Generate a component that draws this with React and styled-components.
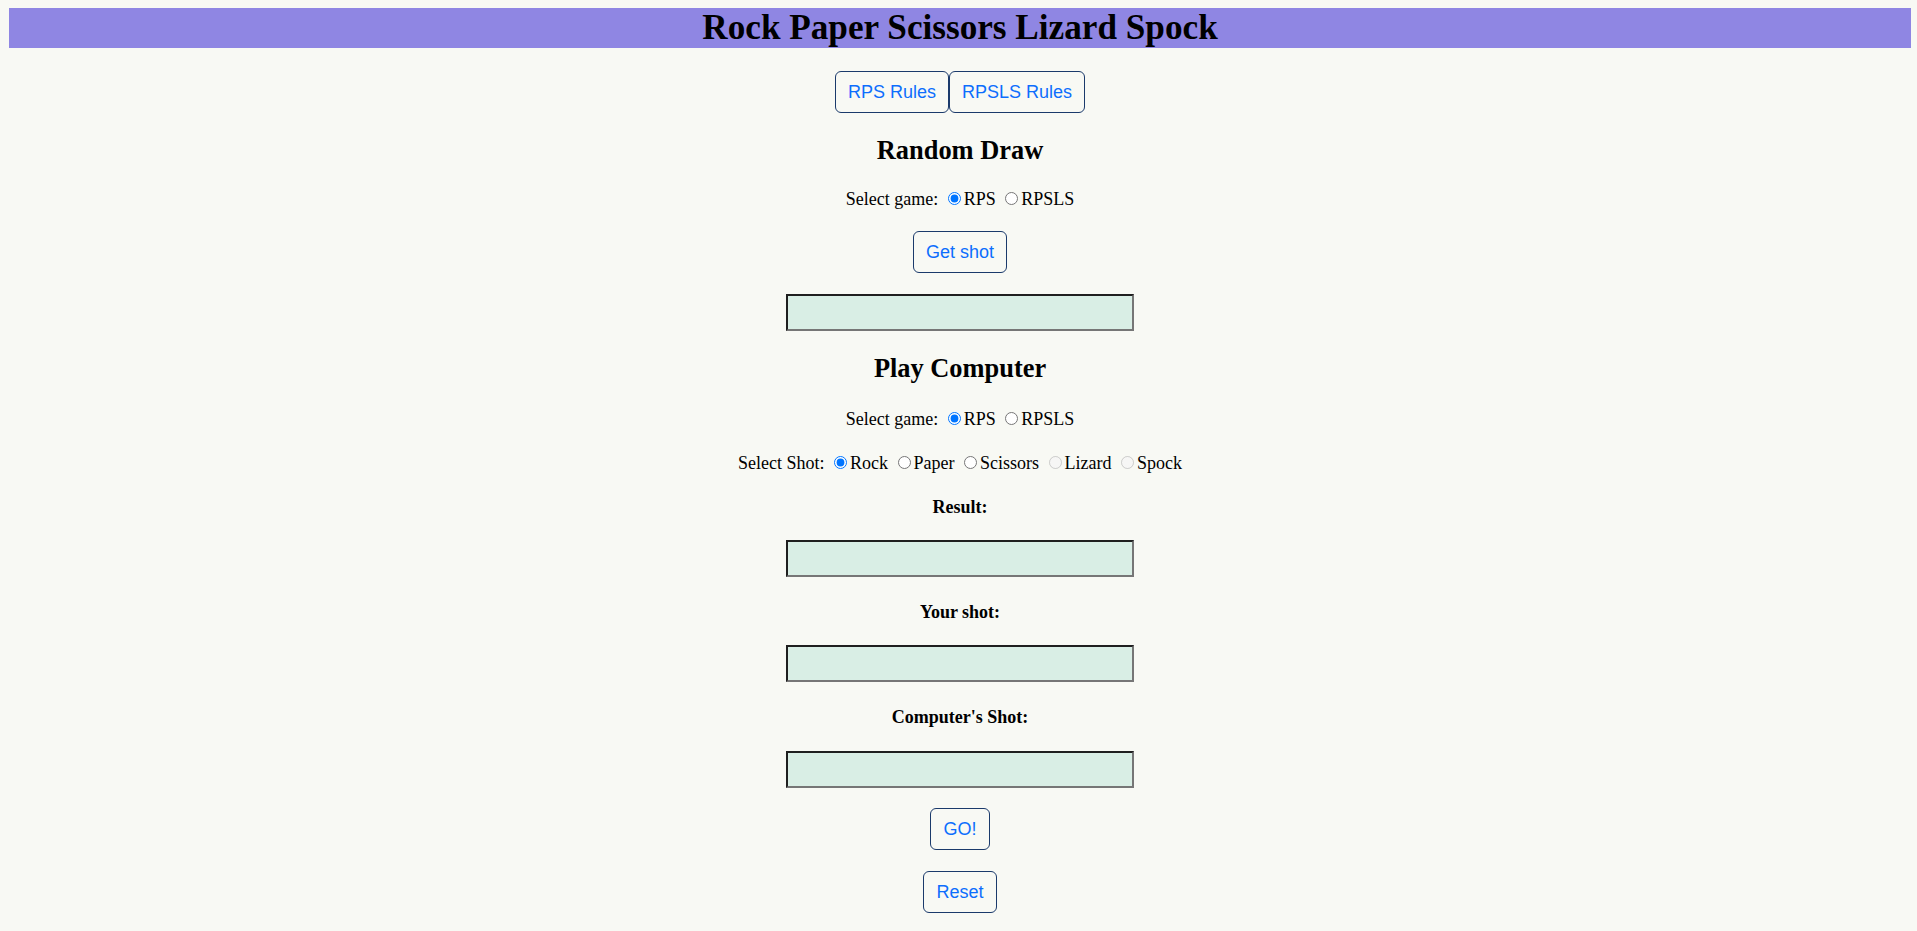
import React from "react";
import styled, { createGlobalStyle } from "styled-components";

//Global page look
const GlobalStyle = createGlobalStyle`
  body {
    margin: 8px 6px 8px 9px;
    background: #f8f9f4;
    font-family: "Liberation Serif", "Times New Roman", serif;
    font-size: 18px;
    color: #000;
  }
`;

const App = () => {
  return (
    <>
      <GlobalStyle />
      <Page>
        <Title>Rock Paper Scissors Lizard Spock</Title>
        <RulesBar $mt={23}>
          <Button>RPS Rules</Button>
          <Button>RPSLS Rules</Button>
        </RulesBar>

        {/* Random Draw */}
        <SectionTitle $mt={22.6}>Random Draw</SectionTitle>
        <ChoiceRow $mt={22.6}>
          Select game: <Radio name="draw-game" defaultChecked />RPS{" "}
          <Radio name="draw-game" />RPSLS
        </ChoiceRow>
        <Button $mt={19.8}>Get shot</Button>
        <Output $mt={21} readOnly />

        {/* Play Computer */}
        <SectionTitle $mt={22.9}>Play Computer</SectionTitle>
        <ChoiceRow $mt={23.7}>
          Select game: <Radio name="play-game" defaultChecked />RPS{" "}
          <Radio name="play-game" />RPSLS
        </ChoiceRow>
        <ChoiceRow $mt={20.6}>
          Select Shot: <Radio name="shot" defaultChecked />Rock{" "}
          <Radio name="shot" />Paper{" "}
          <Radio name="shot" />Scissors{" "}
          <Radio name="shot" disabled />Lizard{" "}
          <Radio name="shot" disabled />Spock
        </ChoiceRow>
        <FieldLabel $mt={20.4}>Result:</FieldLabel>
        <Output $mt={21.4} readOnly />
        <FieldLabel $mt={23.6}>Your shot:</FieldLabel>
        <Output $mt={21.4} readOnly />
        <FieldLabel $mt={24.2}>Computer's Shot:</FieldLabel>
        <Output $mt={21.8} readOnly />
        <Button $mt={20}>GO!</Button>
        <Button $mt={21}>Reset</Button>
      </Page>
    </>
  );
};

const Page = styled.main`
  display: flex;
  flex-direction: column;
  align-items: center;
  text-align: center;
`;

const Title = styled.h1`
  align-self: stretch;
  margin: 0;
  background: #8f86e3;
  font-size: 35.2px;
  line-height: 40px;
  font-weight: bold;
`;

const RulesBar = styled.div`
  display: flex;
  margin-top: ${(p) => p.$mt || 0}px;
`;

const Button = styled.button`
  margin: ${(p) => p.$mt || 0}px 0 0 0;
  padding: 6px 12px;
  font-family: "Liberation Sans", Arial, sans-serif;
  font-size: 18px;
  line-height: 28px;
  color: #0d6efd;
  background: transparent;
  border: 1px solid #1b3a6b;
  border-radius: 6px;
  cursor: pointer;
`;

const SectionTitle = styled.h2`
  margin: ${(p) => p.$mt || 0}px 0 0 0;
  font-size: 26.4px;
  line-height: 29px;
  font-weight: bold;
`;

const ChoiceRow = styled.div`
  margin-top: ${(p) => p.$mt || 0}px;
  line-height: 24px;
`;

const Radio = styled.input.attrs({ type: "radio" })`
  margin: 3px 3px 0 5px;
`;

const FieldLabel = styled.div`
  margin-top: ${(p) => p.$mt || 0}px;
  line-height: 23px;
  font-weight: bold;
`;

const Output = styled.input.attrs({ type: "text" })`
  box-sizing: border-box;
  width: 348px;
  height: 37px;
  margin: ${(p) => p.$mt || 0}px 0 0 0;
  padding: 1px 2px;
  background: #d9eee5;
  border: 2px solid;
  border-color: #1f1f1f #767676 #767676 #1f1f1f;
  font-family: "Liberation Serif", serif;
  font-size: 18px;
`;

export default App;
